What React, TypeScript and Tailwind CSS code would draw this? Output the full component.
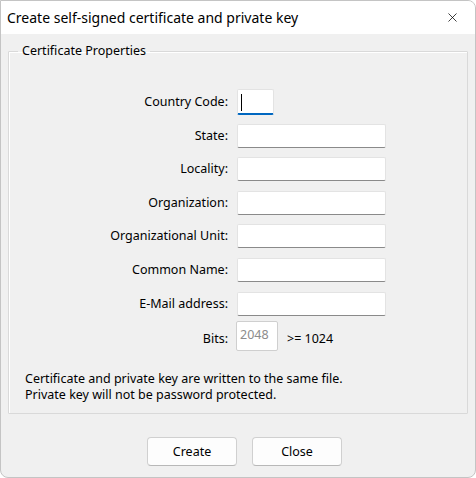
import { X } from 'lucide-react';

// Win11-style "create self-signed certificate" dialog.
const fields = [
  'State:',
  'Locality:',
  'Organization:',
  'Organizational Unit:',
  'Common Name:',
  'E-Mail address:',
];

function TextBox({ width = 'w-[149px]' }: { width?: string }) {
  return (
    <div
      className={`${width} h-[24px] rounded-[2px] border border-[#e3e3e3] border-b-[#8a8a8a] bg-white`}
    />
  );
}

function Row({ label, children }: { label: string; children: React.ReactNode }) {
  return (
    <div className="flex h-[24px] items-center">
      <div className="w-[220px] pr-[1px] text-right">{label}</div>
      <div className="ml-[8px] flex items-center">{children}</div>
    </div>
  );
}

export default function App() {
  return (
    <div
      className="flex h-[478px] w-[476px] flex-col overflow-hidden rounded-tr-[8px] rounded-b-[8px] border border-[#c4c4c4] bg-[#f0f0f0] text-[12.5px] leading-[16px] text-[#000]"
      style={{ fontFamily: '"Noto Sans", "Liberation Sans", Arial, sans-serif' }}
    >
      <div className="flex h-[33px] shrink-0 items-center justify-between bg-white pl-[6px] pr-[15px]">
        <span className="text-[14px] leading-none">Create self-signed certificate and private key</span>
        <X size={15} strokeWidth={1.2} className="text-black" />
      </div>

      <fieldset className="mx-[7px] mt-[9px] h-[371px] rounded-[1px] border border-[#d9d9d9] px-0 pt-0 shadow-[inset_1px_1px_0_#ffffff]">
        <legend className="ml-[9px] px-[4px] leading-[16px] text-[#000]">Certificate Properties</legend>

        <div className="mt-[31px] flex flex-col gap-[9.6px]">
          <Row label="Country Code:">
            <div className="relative h-[26px] w-[37px] rounded-[2px] border border-[#e3e3e3] border-b-2 border-b-[#0067c0] bg-white">
              <div className="absolute left-[3px] top-[4px] h-[17px] w-[1px] bg-black" />
            </div>
          </Row>
          {fields.map(f => (
            <Row key={f} label={f}>
              <TextBox />
            </Row>
          ))}
        </div>

        <div className="mt-[5px] flex h-[30px] items-center">
          <div className="w-[220px] pr-[1px] pt-[7px] text-right">Bits:</div>
          <div className="ml-[7px] flex h-[30px] w-[42px] items-start rounded-[2px] border border-[#cfcfcf] bg-white px-[3px] pt-[5px] text-[#8c8c8c]">
            2048
          </div>
          <span className="ml-[9px] pt-[7px]">&gt;= 1024</span>
        </div>

        <div className="ml-[16px] mt-[20px] leading-[16px]">
          <div>Certificate and private key are written to the same file.</div>
          <div>Private key will not be password protected.</div>
        </div>
      </fieldset>

      <div className="mt-[23px] flex justify-center gap-[15px] pl-[13px]">
        <button className="h-[29px] w-[90px] rounded-[4px] border border-[#d0d0d0] border-b-[#b8b8b8] bg-[#fdfdfd]">
          Create
        </button>
        <button className="h-[29px] w-[90px] rounded-[4px] border border-[#d0d0d0] border-b-[#b8b8b8] bg-[#fdfdfd]">
          Close
        </button>
      </div>
    </div>
  );
}
